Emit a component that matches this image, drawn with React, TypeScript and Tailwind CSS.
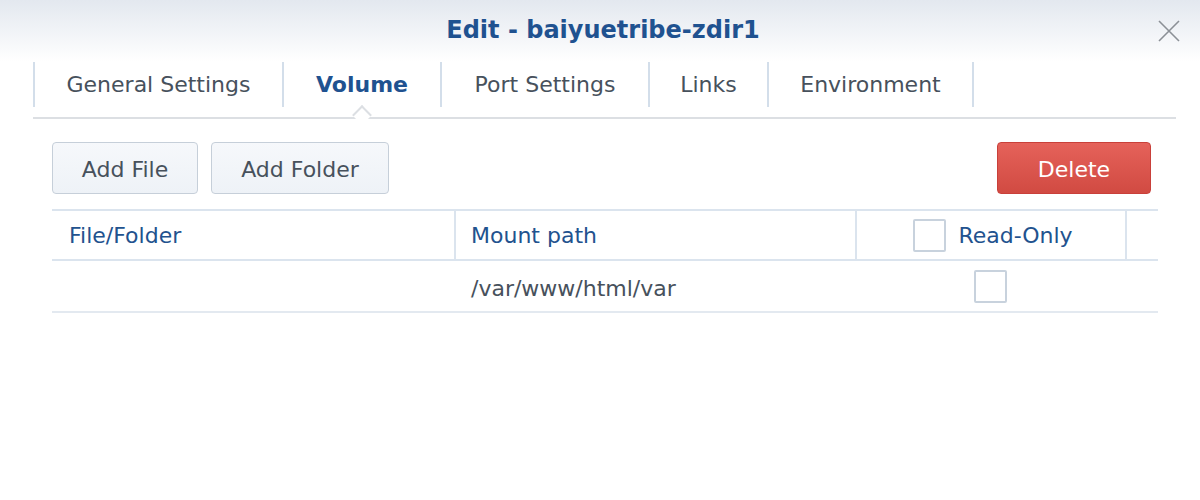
import { useState } from 'react';

const tabs = [
  { name: 'General Settings', w: 'w-[249px]' },
  { name: 'Volume', w: 'w-[158px]' },
  { name: 'Port Settings', w: 'w-[208px]' },
  { name: 'Links', w: 'w-[119px]' },
  { name: 'Environment', w: 'w-[207px]' },
];

function Checkbox({ checked, onChange }: { checked: boolean; onChange: () => void }) {
  return (
    <button
      onClick={onChange}
      className="flex h-[33px] w-[33px] shrink-0 items-center justify-center rounded-[2px] border-2 border-[#c8d2dd] bg-white"
    >
      {checked && (
        <svg className="h-5 w-5 text-[#2b64a6]" viewBox="0 0 24 24" fill="none" stroke="currentColor" strokeWidth={3}>
          <path d="M5 12l5 5 9-10" />
        </svg>
      )}
    </button>
  );
}

export default function App() {
  const [active, setActive] = useState('Volume');
  const [allRO, setAllRO] = useState(false);
  const [rowRO, setRowRO] = useState(false);

  return (
    <div
      className="h-[500px] w-[1200px] overflow-hidden bg-white text-[22px] text-[#47515c]"
      style={{ fontFamily: '"DejaVu Sans", Verdana, sans-serif' }}
    >
      {/* タイトルバー */}
      <div className="relative flex h-[62px] items-center justify-center bg-gradient-to-b from-[#e3e8ef] to-white">
        <h1 className="pb-[2px] pl-[6px] text-[24px] font-bold text-[#1f5290]">Edit - baiyuetribe-zdir1</h1>
        <button className="absolute right-[20px] top-[20px] text-[#8b9096]">
          <svg className="h-[22px] w-[22px]" viewBox="0 0 22 22" fill="none" stroke="currentColor" strokeWidth={1.6}>
            <path d="M1 1l20 20M21 1L1 21" />
          </svg>
        </button>
      </div>

      {/* タブ */}
      <div className="relative ml-[33px] mr-[24px] flex h-[57px] items-start border-b-2 border-[#dcdfe3]">
        {tabs.map((t, i) => (
          <button
            key={t.name}
            onClick={() => setActive(t.name)}
            className={`relative flex h-[45px] items-center justify-center border-l-2 border-[#d3deea] ${t.w} ${
              i === tabs.length - 1 ? 'border-r-2' : ''
            } ${active === t.name ? 'font-bold text-[#1f5290]' : 'text-[#47515c]'}`}
          >
            {t.name}
            {active === t.name && (
              <span className="absolute bottom-[-15px] left-1/2 h-[14px] w-[14px] -translate-x-1/2 rotate-45 border-l-2 border-t-2 border-[#dcdfe3] bg-white" />
            )}
          </button>
        ))}
      </div>

      {/* ツールバー */}
      <div className="ml-[52px] mt-[23px] flex w-[1099px] items-center">
        <button className="h-[52px] w-[146px] rounded-[4px] border border-[#c6cfd9] bg-gradient-to-b from-[#f6f8fb] to-[#eef2f7] pt-[3px] text-[#47515c]">
          Add File
        </button>
        <button className="ml-[13px] h-[52px] w-[178px] rounded-[4px] border border-[#c6cfd9] bg-gradient-to-b from-[#f6f8fb] to-[#eef2f7] pt-[3px] text-[#47515c]">
          Add Folder
        </button>
        <button className="ml-auto h-[52px] w-[154px] rounded-[4px] border border-[#c9403a] bg-gradient-to-b from-[#e5625a] to-[#d14a42] pt-[3px] text-white">
          Delete
        </button>
      </div>

      {/* テーブル */}
      <div className="ml-[52px] mt-[15px] w-[1106px]">
        <div className="flex h-[52px] items-stretch border-y-2 border-[#dbe4ee] text-[#22528e]">
          <div className="flex w-[404px] items-center border-r-2 border-[#dbe4ee] pl-[17px]">File/Folder</div>
          <div className="flex w-[401px] items-center border-r-2 border-[#dbe4ee] pl-[15px]">Mount path</div>
          <div className="flex w-[270px] items-center justify-center gap-[12px] border-r-2 border-[#dbe4ee] pl-[4px]">
            <Checkbox checked={allRO} onChange={() => setAllRO(!allRO)} />
            Read-Only
          </div>
        </div>
        <div className="flex h-[52px] items-center border-b-2 border-[#e3e9f0]">
          <div className="w-[404px]" />
          <div className="w-[401px] pl-[15px] pt-[5px]">/var/www/html/var</div>
          <div className="flex w-[270px] justify-center pr-[4px]">
            <Checkbox checked={rowRO || allRO} onChange={() => setRowRO(!rowRO)} />
          </div>
        </div>
      </div>
    </div>
  );
}
